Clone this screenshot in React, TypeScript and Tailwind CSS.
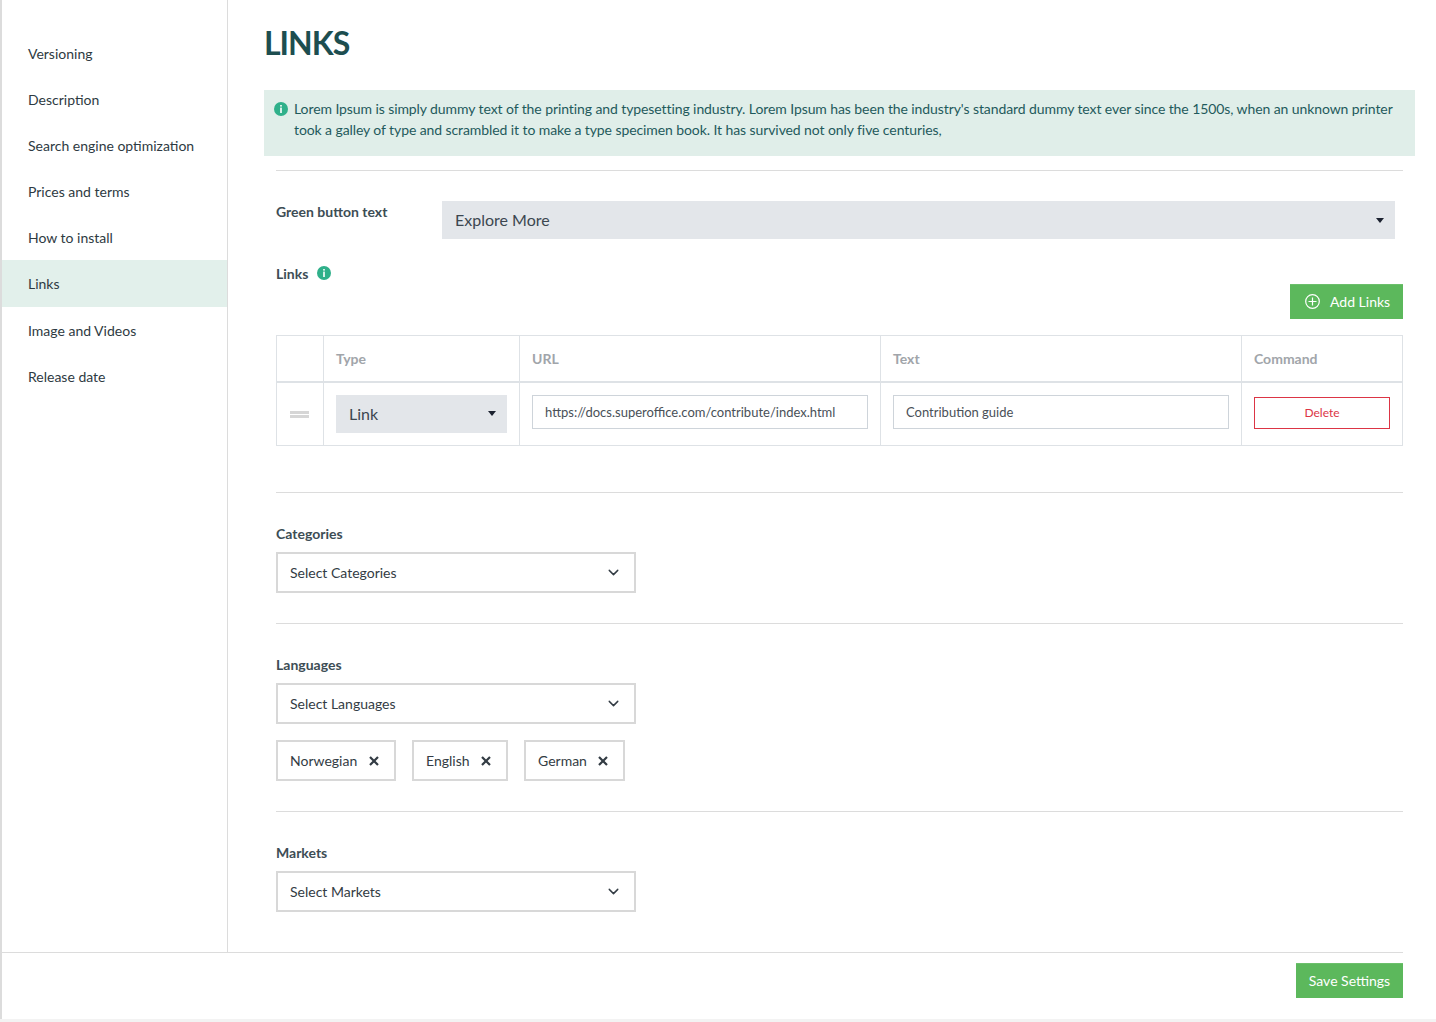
import React from "react";
import { ChevronDown } from "lucide-react";

const navItems = ["Versioning", "Description", "Search engine optimization", "Prices and terms", "How to install", "Links", "Image and Videos", "Release date"];

function Info() {
  return (
    <svg viewBox="0 0 14 14" className="w-3.5 h-3.5 shrink-0">
      <circle cx="7" cy="7" r="7" fill="#2fb08a" />
      <rect x="6.2" y="3" width="1.6" height="1.6" fill="#fff" />
      <rect x="6.2" y="5.6" width="1.6" height="5.4" fill="#fff" />
    </svg>
  );
}

function Caret() {
  return (
    <svg viewBox="0 0 8 5" className="w-2 h-[5px] shrink-0">
      <path d="M0 0h8L4 5z" fill="#1c2230" />
    </svg>
  );
}

function GraySelect({ label, className }: { label: string; className: string }) {
  return (
    <div className={`flex items-center justify-between bg-[#e3e6ea] h-[38px] pl-[13px] pr-[11px] text-[16px] text-[#3c4650] ${className}`}>
      <span>{label}</span>
      <Caret />
    </div>
  );
}

function BoxSelect({ label }: { label: string }) {
  return (
    <div className="flex items-center justify-between w-[360px] h-[41px] border-2 border-[#d8d8d8] pl-3 pr-3 text-[14px] text-[#333c44]">
      <span>{label}</span>
      <ChevronDown className="w-[17px] h-[17px] text-[#333c44]" strokeWidth={2} />
    </div>
  );
}

function Tag({ label, width }: { label: string; width: string }) {
  return (
    <div className={`flex items-center justify-between h-[41px] border-2 border-[#d8d8d8] pl-3 pr-[15px] text-[14px] text-[#333c44] ${width}`}>
      <span>{label}</span>
      <svg viewBox="0 0 10 10" className="w-2.5 h-2.5 shrink-0">
        <path d="M1 1l8 8M9 1l-8 8" stroke="#333c44" strokeWidth="2.2" fill="none" />
      </svg>
    </div>
  );
}

function Label({ children, className = "" }: { children: React.ReactNode; className?: string }) {
  return <div className={`text-[14px] font-bold leading-[18px] text-[#3d4d55] ${className}`}>{children}</div>;
}

export default function App() {
  return (
    <div className="h-[1022px] bg-[#f3f3f3] font-['Lato','Liberation_Sans',sans-serif] overflow-hidden">
      <div className="h-[1019px] bg-white border-l-2 border-[#dcdcdc] flex flex-col">
        <div className="h-[952px] flex">
          <aside className="w-[226px] shrink-0 border-r border-[#dcdcdc] pt-[30px]">
            {navItems.map((item) => (
              <div
                key={item}
                className={`flex items-center pl-[26px] text-[14px] text-[#2e3a42] ${item === "Links" ? "bg-[#e2f0eb] h-[47px]" : "h-[46px]"}`}
              >
                {item}
              </div>
            ))}
          </aside>
          <main className="flex-1 pl-9 pr-[21px]">
            <h1 className="mt-[24px] h-[38px] text-[32px] leading-[38px] font-bold text-[#1d4e50] tracking-[-1px]">LINKS</h1>
            <div className="mt-[28px] h-[66px] bg-[#e0eee9] pt-2 pl-[10px] pr-4 flex gap-[6px] text-[14px] leading-[21px] text-[#1f5a5c] tracking-[-0.09px]">
              <div className="pt-[4px]"><Info /></div>
              <p>
                Lorem Ipsum is simply dummy text of the printing and typesetting industry. Lorem Ipsum has been the industry's standard dummy text ever since the 1500s, when an unknown printer took a galley of type and scrambled it to make a type specimen book. It has survived not only five centuries,
              </p>
            </div>
            <div className="px-3">
              <hr className="mt-[14px] border-t border-[#dcdcdc]" />
              <div className="mt-[30px] flex">
                <Label className="w-[166px] pt-[2px]">Green button text</Label>
                <GraySelect label="Explore More" className="w-[953px]" />
              </div>
              <div className="mt-[26px] flex items-start gap-[8px]">
                <Label>Links</Label>
                <div className="mt-[1px] ml-[0.5px]"><Info /></div>
              </div>
              <div className="flex justify-end mt-[1px]">
                <button className="flex items-center gap-[10px] h-[35px] w-[113px] pl-[15px] pb-[2px] bg-[#5cb85c] border-t border-[#6cc06c] text-white text-[14px]">
                  <svg viewBox="0 0 15 15" className="w-[15px] h-[15px] shrink-0" fill="none" stroke="#fff" strokeWidth="1.2">
                    <circle cx="7.5" cy="7.5" r="6.8" />
                    <path d="M7.5 3.5v8M3.5 7.5h8" />
                  </svg>
                  Add Links
                </button>
              </div>
              <table className="mt-[16px] w-[1127px] table-fixed border-collapse text-[14px]">
                <colgroup>
                  <col className="w-[47px]" />
                  <col className="w-[196px]" />
                  <col className="w-[361px]" />
                  <col className="w-[361px]" />
                  <col className="w-[161px]" />
                </colgroup>
                <thead>
                  <tr className="h-[46px] text-left font-bold text-[#a1a5aa]">
                    <th className="border border-b-2 border-[#dee2e6]"></th>
                    <th className="border border-b-2 border-[#dee2e6] px-3">Type</th>
                    <th className="border border-b-2 border-[#dee2e6] px-3">URL</th>
                    <th className="border border-b-2 border-[#dee2e6] px-3">Text</th>
                    <th className="border border-b-2 border-[#dee2e6] px-3">Command</th>
                  </tr>
                </thead>
                <tbody>
                  <tr className="h-[64px]">
                    <td className="border border-[#dee2e6]">
                      <div className="ml-[13px] mt-[1px] w-[19px] h-[7px] border-y-[3px] border-[#d6d6d6]"></div>
                    </td>
                    <td className="border border-[#dee2e6] px-3">
                      <GraySelect label="Link" className="w-[171px]" />
                    </td>
                    <td className="border border-[#dee2e6] px-3 align-top pt-3">
                      <div className="h-[34px] border border-[#ced4da] pt-[2px] flex items-center pl-3 text-[13px] text-[#495057]">https://docs.superoffice.com/contribute/index.html</div>
                    </td>
                    <td className="border border-[#dee2e6] px-3 align-top pt-3">
                      <div className="h-[34px] border border-[#ced4da] pt-[2px] flex items-center pl-3 text-[13px] text-[#495057]">Contribution guide</div>
                    </td>
                    <td className="border border-[#dee2e6] px-3 align-top pt-[14px]">
                      <div className="h-[32px] border border-[#dc3545] flex items-center justify-center text-[12px] text-[#dc3545]">Delete</div>
                    </td>
                  </tr>
                </tbody>
              </table>
              <hr className="mt-[46px] border-t border-[#dcdcdc]" />
              <Label className="mt-[32px] mb-[9px]">Categories</Label>
              <BoxSelect label="Select Categories" />
              <hr className="mt-[30px] border-t border-[#dcdcdc]" />
              <Label className="mt-[32px] mb-[9px]">Languages</Label>
              <BoxSelect label="Select Languages" />
              <div className="mt-4 flex gap-4">
                <Tag label="Norwegian" width="w-[120px]" />
                <Tag label="English" width="w-[96px]" />
                <Tag label="German" width="w-[101px]" />
              </div>
              <hr className="mt-[30px] border-t border-[#dcdcdc]" />
              <Label className="mt-[32px] mb-[9px]">Markets</Label>
              <BoxSelect label="Select Markets" />
            </div>
          </main>
        </div>
        <div className="mr-[33px] flex-1 border-t border-[#dcdcdc] flex justify-end items-start pt-[10px]">
          <button className="h-[35px] w-[107px] pb-[2px] bg-[#5cb85c] border-t border-[#6cc06c] text-white text-[14px]">Save Settings</button>
        </div>
      </div>
    </div>
  );
}
